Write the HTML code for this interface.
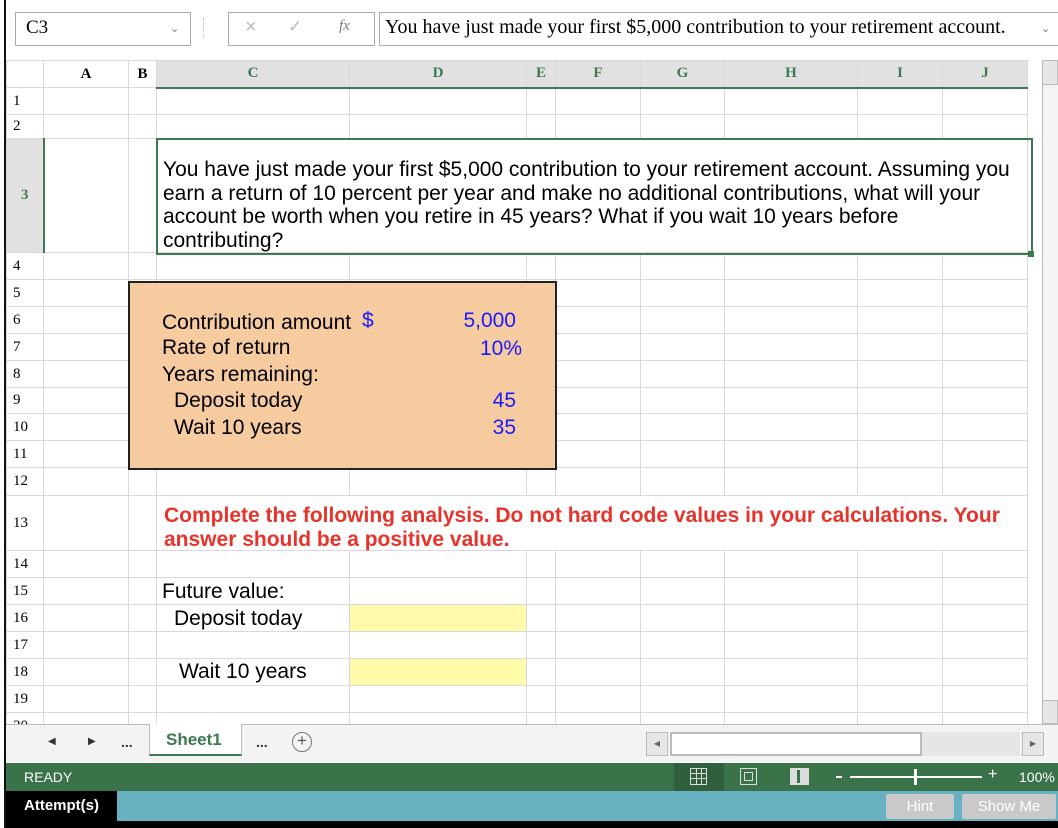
<!DOCTYPE html>
<html><head><meta charset="utf-8"><style>
*{margin:0;padding:0;box-sizing:border-box}
body{width:1058px;height:828px;position:relative;background:#fff;overflow:hidden;font-family:"Liberation Sans",Arial,sans-serif}
.a{position:absolute}
table{border-collapse:collapse;table-layout:fixed;position:absolute;left:6px;top:60px}
td{border:1px solid #d9d9d9;padding:0;font-family:"Liberation Serif",serif;font-size:15px;text-align:center;color:#000}
tr.h td{background:#fff;font-weight:bold;color:#000}
tr.h td.s{background:#e1e1e1;color:#3d7a4f;border-bottom:2px solid #3d7a4f}
td.rh{text-align:left;padding-left:6px;background:#fff}
.t{font-family:"Liberation Sans",Arial,sans-serif;font-size:21px;color:#000;position:absolute;white-space:nowrap}
.r{text-align:right}
.b{color:#1a1aff}
</style></head><body>
<div class="a" style="left:4px;top:0;width:2px;height:828px;background:#111"></div>
<div class="a" style="left:15px;top:12px;width:176px;height:34px;border:1px solid #aaa"></div>
<div class="t" style="left:26px;top:17px;font-family:'Liberation Serif',serif;font-size:19px">C3</div>
<div class="a" style="left:170px;top:22px;font-size:11px;color:#777">&#8964;</div>
<div class="a" style="left:203px;top:18px;width:1px;height:20px;border-left:1px dotted #bbb"></div>
<div class="a" style="left:228px;top:12px;width:147px;height:34px;border:1px solid #aaa"></div>
<div class="a" style="left:245px;top:16px;font-size:20px;color:#bbb">&#215;</div>
<div class="a" style="left:288px;top:17px;font-size:17px;color:#bbb">&#10003;</div>
<div class="a" style="left:339px;top:18px;font-family:'Liberation Serif',serif;font-style:italic;font-size:15px;color:#777">fx</div>
<div class="a" style="left:379px;top:12px;width:679px;height:34px;border:1px solid #aaa;border-right:none"></div>
<div class="t" style="left:385px;top:16px;font-family:'Liberation Serif',serif;font-size:20px">You have just made your first $5,000 contribution to your retirement account.</div>
<div class="a" style="left:1041px;top:22px;font-size:11px;color:#777">&#8964;</div>
<table>
<colgroup><col style="width:37px"><col style="width:85px"><col style="width:28px"><col style="width:193px"><col style="width:177px"><col style="width:29px"><col style="width:85px"><col style="width:84px"><col style="width:133px"><col style="width:85px"><col style="width:85px"></colgroup>
<tr class="h" style="height:27px"><td style="background:#fff"></td><td>A</td><td>B</td><td class="s">C</td><td class="s">D</td><td class="s">E</td><td class="s">F</td><td class="s">G</td><td class="s">H</td><td class="s">I</td><td class="s">J</td></tr>
<tr style="height:27px"><td class="rh">1</td><td></td><td></td><td></td><td></td><td></td><td></td><td></td><td></td><td></td><td></td></tr>
<tr style="height:24px"><td class="rh">2</td><td></td><td></td><td></td><td></td><td></td><td></td><td></td><td></td><td></td><td></td></tr>
<tr style="height:114px"><td style="background:#e1e1e1;color:#3d7a4f;font-weight:bold;border-right:2px solid #3d7a4f">3</td><td></td><td></td><td colspan="8"></td></tr>
<tr style="height:27px"><td class="rh">4</td><td></td><td></td><td></td><td></td><td></td><td></td><td></td><td></td><td></td><td></td></tr>
<tr style="height:27px"><td class="rh">5</td><td></td><td></td><td></td><td></td><td></td><td></td><td></td><td></td><td></td><td></td></tr>
<tr style="height:27px"><td class="rh">6</td><td></td><td></td><td></td><td></td><td></td><td></td><td></td><td></td><td></td><td></td></tr>
<tr style="height:27px"><td class="rh">7</td><td></td><td></td><td></td><td></td><td></td><td></td><td></td><td></td><td></td><td></td></tr>
<tr style="height:27px"><td class="rh">8</td><td></td><td></td><td></td><td></td><td></td><td></td><td></td><td></td><td></td><td></td></tr>
<tr style="height:26px"><td class="rh">9</td><td></td><td></td><td></td><td></td><td></td><td></td><td></td><td></td><td></td><td></td></tr>
<tr style="height:27px"><td class="rh">10</td><td></td><td></td><td></td><td></td><td></td><td></td><td></td><td></td><td></td><td></td></tr>
<tr style="height:27px"><td class="rh">11</td><td></td><td></td><td></td><td></td><td></td><td></td><td></td><td></td><td></td><td></td></tr>
<tr style="height:28px"><td class="rh">12</td><td></td><td></td><td></td><td></td><td></td><td></td><td></td><td></td><td></td><td></td></tr>
<tr style="height:55px"><td class="rh">13</td><td></td><td></td><td colspan="8"></td></tr>
<tr style="height:27px"><td class="rh">14</td><td></td><td></td><td></td><td></td><td></td><td></td><td></td><td></td><td></td><td></td></tr>
<tr style="height:27px"><td class="rh">15</td><td></td><td></td><td></td><td></td><td></td><td></td><td></td><td></td><td></td><td></td></tr>
<tr style="height:27px"><td class="rh">16</td><td></td><td></td><td></td><td style="background:#fffbaa"></td><td></td><td></td><td></td><td></td><td></td><td></td></tr>
<tr style="height:27px"><td class="rh">17</td><td></td><td></td><td></td><td></td><td></td><td></td><td></td><td></td><td></td><td></td></tr>
<tr style="height:27px"><td class="rh">18</td><td></td><td></td><td></td><td style="background:#fffbaa"></td><td></td><td></td><td></td><td></td><td></td><td></td></tr>
<tr style="height:27px"><td class="rh">19</td><td></td><td></td><td></td><td></td><td></td><td></td><td></td><td></td><td></td><td></td></tr>
<tr style="height:27px"><td class="rh">20</td><td></td><td></td><td></td><td></td><td></td><td></td><td></td><td></td><td></td><td></td></tr>
</table>
<div class="a" style="left:1042px;top:60px;width:16px;height:664px;background:#f4f4f4;border-left:1px solid #bbb"></div>
<div class="a" style="left:1042px;top:60px;width:16px;height:25px;background:#e6e6e6;border:1px solid #bbb"></div>
<div class="a" style="left:1042px;top:700px;width:16px;height:24px;background:#e6e6e6;border:1px solid #bbb"></div>
<div class="a" style="left:156px;top:138px;width:877px;height:117px;border:2px solid #3d7a4f"></div>
<div class="a" style="left:1028px;top:251px;width:6px;height:6px;background:#3d7a4f"></div>
<div class="t" style="left:163px;top:158px;line-height:23.5px">You have just made your first $5,000 contribution to your retirement account. Assuming you<br>earn a return of 10 percent per year and make no additional contributions, what will your<br>account be worth when you retire in 45 years? What if you wait 10 years before<br>contributing?</div>
<div class="a" style="left:128px;top:281px;width:429px;height:189px;background:#f6cba0;border:2px solid #222"></div>
<div class="t" style="left:162px;top:311px">Contribution amount</div>
<div class="t b" style="left:362px;top:309px">$</div>
<div class="t b r" style="left:416px;width:100px;top:309px">5,000</div>
<div class="t" style="left:162px;top:336px">Rate of return</div>
<div class="t b r" style="left:422px;width:100px;top:337px">10%</div>
<div class="t" style="left:162px;top:363px">Years remaining:</div>
<div class="t" style="left:174px;top:389px">Deposit today</div>
<div class="t b r" style="left:416px;width:100px;top:389px">45</div>
<div class="t" style="left:174px;top:416px">Wait 10 years</div>
<div class="t b r" style="left:416px;width:100px;top:416px">35</div>
<div class="t" style="left:164px;top:504px;color:#e8332a;font-weight:bold;line-height:24px;font-size:21px">Complete the following analysis. Do not hard code values in your calculations. Your<br>answer should be a positive value.</div>
<div class="t" style="left:162px;top:580px">Future value:</div>
<div class="t" style="left:174px;top:607px">Deposit today</div>
<div class="t" style="left:179px;top:660px">Wait 10 years</div>
<div class="a" style="left:6px;top:724px;width:1052px;height:38px;background:#f3f3f3;border-top:1px solid #bbb"></div>
<div class="a" style="left:48px;top:736px;font-size:10px;color:#333">&#9664;</div>
<div class="a" style="left:88px;top:736px;font-size:10px;color:#333">&#9654;</div>
<div class="a" style="left:121px;top:734px;font-size:14px;font-weight:bold;color:#333">...</div>
<div class="a" style="left:149px;top:724px;width:93px;height:32px;background:#fff;border:1px solid #bbb;border-top:none;border-bottom:2px solid #3d7a4f"></div>
<div class="a" style="left:166px;top:730px;font-size:17px;font-weight:bold;color:#3d7a4f">Sheet1</div>
<div class="a" style="left:256px;top:734px;font-size:14px;font-weight:bold;color:#333">...</div>
<div class="a" style="left:292px;top:732px;width:20px;height:20px;border:1.5px solid #777;border-radius:50%;text-align:center;line-height:16px;font-size:17px;color:#555">+</div>
<div class="a" style="left:646px;top:732px;width:22px;height:24px;background:#e6e6e6;border:1px solid #bbb;font-size:8px;color:#666;text-align:center;line-height:22px">&#9664;</div>
<div class="a" style="left:670px;top:732px;width:350px;height:24px;background:#e6e6e6"></div>
<div class="a" style="left:670px;top:732px;width:252px;height:24px;background:#fff;border:2px solid #bbb"></div>
<div class="a" style="left:1022px;top:732px;width:22px;height:24px;background:#e6e6e6;border:1px solid #bbb;font-size:8px;color:#666;text-align:center;line-height:22px">&#9654;</div>
<div class="a" style="left:6px;top:763px;width:1052px;height:28px;background:#3a7249"></div>
<div class="a" style="left:24px;top:769px;font-size:14px;color:#fff">READY</div>
<div class="a" style="left:674px;top:763px;width:50px;height:28px;background:#2f5f3c"></div>
<div class="a" style="left:690px;top:768px;width:17px;height:17px;border:1.5px solid #ddd;background:linear-gradient(90deg,transparent 5px,#ddd 5px,#ddd 6px,transparent 6px,transparent 10px,#ddd 10px,#ddd 11px,transparent 11px),linear-gradient(0deg,transparent 5px,#ddd 5px,#ddd 6px,transparent 6px,transparent 10px,#ddd 10px,#ddd 11px,transparent 11px)"></div>
<div class="a" style="left:740px;top:768px;width:17px;height:17px;border:1.5px solid #ddd;padding:3px"><div style="border:1px solid #ddd;height:9px"></div></div>
<div class="a" style="left:790px;top:768px;width:19px;height:17px;border:2px solid #ddd;background:linear-gradient(90deg,#ddd 5px,transparent 5px,transparent 8px,#ddd 8px)"></div>
<div class="a" style="left:836px;top:776px;width:6px;height:2px;background:#fff"></div>
<div class="a" style="left:850px;top:776px;width:132px;height:2px;background:#fff"></div>
<div class="a" style="left:914px;top:769px;width:3px;height:16px;background:#fff"></div>
<div class="a" style="left:988px;top:766px;font-size:16px;color:#fff">+</div>
<div class="a" style="left:1019px;top:769px;font-size:14px;color:#fff">100%</div>
<div class="a" style="left:6px;top:791px;width:1052px;height:30px;background:#67b1c0"></div>
<div class="a" style="left:6px;top:791px;width:111px;height:30px;background:#000"></div>
<div class="a" style="left:24px;top:797px;font-size:15px;font-weight:bold;color:#fff">Attempt(s)</div>
<div class="a" style="left:886px;top:794px;width:68px;height:25px;background:#c9c9c9;border-radius:2px;color:#fff;font-size:15px;text-align:center;line-height:25px">Hint</div>
<div class="a" style="left:962px;top:794px;width:94px;height:25px;background:#c9c9c9;border-radius:2px;color:#fff;font-size:15px;text-align:center;line-height:25px">Show Me</div>
<div class="a" style="left:6px;top:821px;width:1052px;height:7px;background:#000"></div>
</body></html>
